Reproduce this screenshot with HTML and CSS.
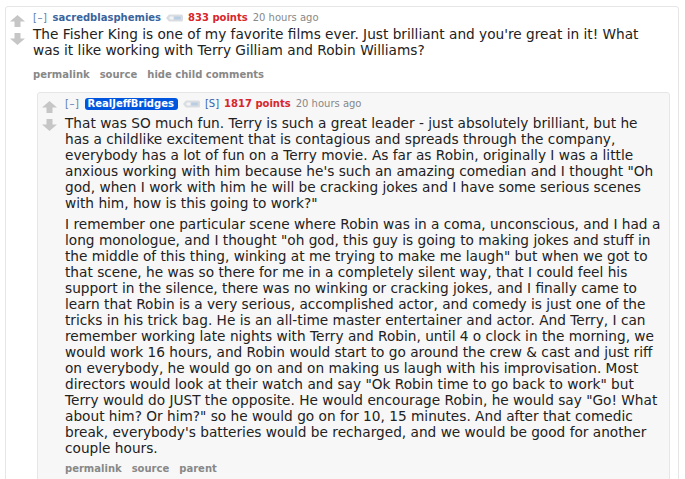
FILE: index.html
```html
<!DOCTYPE html>
<html lang="en">
<head>
<meta charset="utf-8">
<title>Comments</title>
<link rel="stylesheet" href="styles.css">
</head>
<body>
<div class="thread">
  <div class="comment">
    <div class="row">
      <div class="midcol">
        <svg class="arrow" viewBox="0 0 15 12" width="15" height="12"><path d="M7.5 0 L15 6.5 L10.5 6.5 L10.5 12 L4.5 12 L4.5 6.5 L0 6.5 Z"/></svg>
        <svg class="arrow" viewBox="0 0 15 12" width="15" height="12"><path d="M7.5 12 L15 5.5 L10.5 5.5 L10.5 0 L4.5 0 L4.5 5.5 L0 5.5 Z"/></svg>
      </div>
      <div class="entry">
        <p class="tagline">
          <span class="expand">[–]</span>
          <span class="author">sacredblasphemies</span>
          <svg class="tagicon" viewBox="0 0 17 8" width="17" height="8"><path d="M0 4 L3 0.5 H15.5 A1.5 1.5 0 0 1 17 2 V6 A1.5 1.5 0 0 1 15.5 7.5 H3 Z" fill="#d9dde2"/><rect x="8" y="2.5" width="7" height="3" rx="1" fill="#b9cde3"/><rect x="3.5" y="2.5" width="4" height="3" rx="1" fill="#f2f4f6"/></svg>
          <span class="score">833 points</span>
          <span class="time">20 hours ago</span>
        </p>
        <div class="md">
          <p>The Fisher King is one of my favorite films ever. Just brilliant and you're great in it! What was it like working with Terry Gilliam and Robin Williams?</p>
        </div>
        <ul class="buttons">
          <li>permalink</li>
          <li>source</li>
          <li>hide child comments</li>
        </ul>
      </div>
    </div>
    <div class="child">
      <div class="comment nested">
        <div class="row">
          <div class="midcol">
            <svg class="arrow" viewBox="0 0 15 12" width="15" height="12"><path d="M7.5 0 L15 6.5 L10.5 6.5 L10.5 12 L4.5 12 L4.5 6.5 L0 6.5 Z"/></svg>
            <svg class="arrow" viewBox="0 0 15 12" width="15" height="12"><path d="M7.5 12 L15 5.5 L10.5 5.5 L10.5 0 L4.5 0 L4.5 5.5 L0 5.5 Z"/></svg>
          </div>
          <div class="entry">
            <p class="tagline">
              <span class="expand">[–]</span>
              <span class="author submitter">RealJeffBridges</span>
              <svg class="tagicon" viewBox="0 0 17 8" width="17" height="8"><path d="M0 4 L3 0.5 H15.5 A1.5 1.5 0 0 1 17 2 V6 A1.5 1.5 0 0 1 15.5 7.5 H3 Z" fill="#d9dde2"/><rect x="8" y="2.5" width="7" height="3" rx="1" fill="#b9cde3"/><rect x="3.5" y="2.5" width="4" height="3" rx="1" fill="#f2f4f6"/></svg>
              <span class="op">[S]</span>
              <span class="score">1817 points</span>
              <span class="time">20 hours ago</span>
            </p>
            <div class="md">
              <p>That was SO much fun. Terry is such a great leader - just absolutely brilliant, but he has a childlike excitement that is contagious and spreads through the company, everybody has a lot of fun on a Terry movie. As far as Robin, originally I was a little anxious working with him because he's such an amazing comedian and I thought "Oh god, when I work with him he will be cracking jokes and I have some serious scenes with him, how is this going to work?"</p>
              <p>I remember one particular scene where Robin was in a coma, unconscious, and I had a long monologue, and I thought "oh god, this guy is going to making jokes and stuff in the middle of this thing, winking at me trying to make me laugh" but when we got to that scene, he was so there for me in a completely silent way, that I could feel his support in the silence, there was no winking or cracking jokes, and I finally came to learn that Robin is a very serious, accomplished actor, and comedy is just one of the tricks in his trick bag. He is an all-time master entertainer and actor. And Terry, I can remember working late nights with Terry and Robin, until 4 o clock in the morning, we would work 16 hours, and Robin would start to go around the crew &amp; cast and just riff on everybody, he would go on and on making us laugh with his improvisation. Most directors would look at their watch and say "Ok Robin time to go back to work" but Terry would do JUST the opposite. He would encourage Robin, he would say "Go! What about him? Or him?" so he would go on for 10, 15 minutes. And after that comedic break, everybody's batteries would be recharged, and we would be good for another couple hours.</p>
            </div>
            <ul class="buttons">
              <li>permalink</li>
              <li>source</li>
              <li>parent</li>
            </ul>
          </div>
        </div>
      </div>
    </div>
  </div>
</div>
</body>
</html>
```
FILE: styles.css
```css
html, body {
  margin: 0;
  padding: 0;
  background: #ffffff;
}

body {
  font-family: "DejaVu Sans", Verdana, sans-serif;
  color: #222222;
}

.thread {
  padding: 6px 6px 0 5px;
}

.comment {
  border: 1px solid #e6e6e6;
  border-radius: 3px;
  background: #ffffff;
  padding: 4px 8px 0 4px;
}

.comment.nested {
  background: #f7f7f7;
  padding-right: 4px;
  padding-bottom: 20px;
}

.row {
  display: flex;
  gap: 8px;
}

.midcol {
  width: 15px;
  display: flex;
  flex-direction: column;
  gap: 6px;
  padding-top: 4px;
}

.arrow {
  display: block;
  fill: #c6c6c6;
}

.entry {
  flex: 1;
  min-width: 0;
}

.tagline {
  margin: 0;
  font-size: 10px;
  line-height: 14px;
  color: #888888;
  display: flex;
  align-items: center;
  gap: 5px;
  white-space: nowrap;
}

.nested .tagline {
  margin-bottom: 3px;
}

.expand {
  color: #5d7eb0;
  letter-spacing: 0.6px;
}

.author {
  color: #3a649c;
  font-weight: bold;
}

.author.submitter {
  background: #0055df;
  color: #ffffff;
  border-radius: 3px;
  padding: 0 4px 0 3px;
  line-height: 12px;
}

.tagicon {
  display: block;
}

.op {
  color: #3264b0;
}

.score {
  color: #d8262b;
  font-weight: bold;
}

.time {
  color: #888888;
}

.md {
  font-size: 13.7px;
  line-height: 16px;
  color: #222222;
  padding-top: 1px;
  max-width: 610px;
}

.md p {
  margin: 0 0 5px 0;
}

.buttons {
  list-style: none;
  margin: 0;
  padding: 5px 0 10px 0;
  display: flex;
  gap: 10px;
  font-size: 10px;
  line-height: 14px;
  font-weight: bold;
  color: #888888;
}

.nested .buttons {
  padding-top: 1px;
}

.child {
  margin-left: 27px;
}
```
